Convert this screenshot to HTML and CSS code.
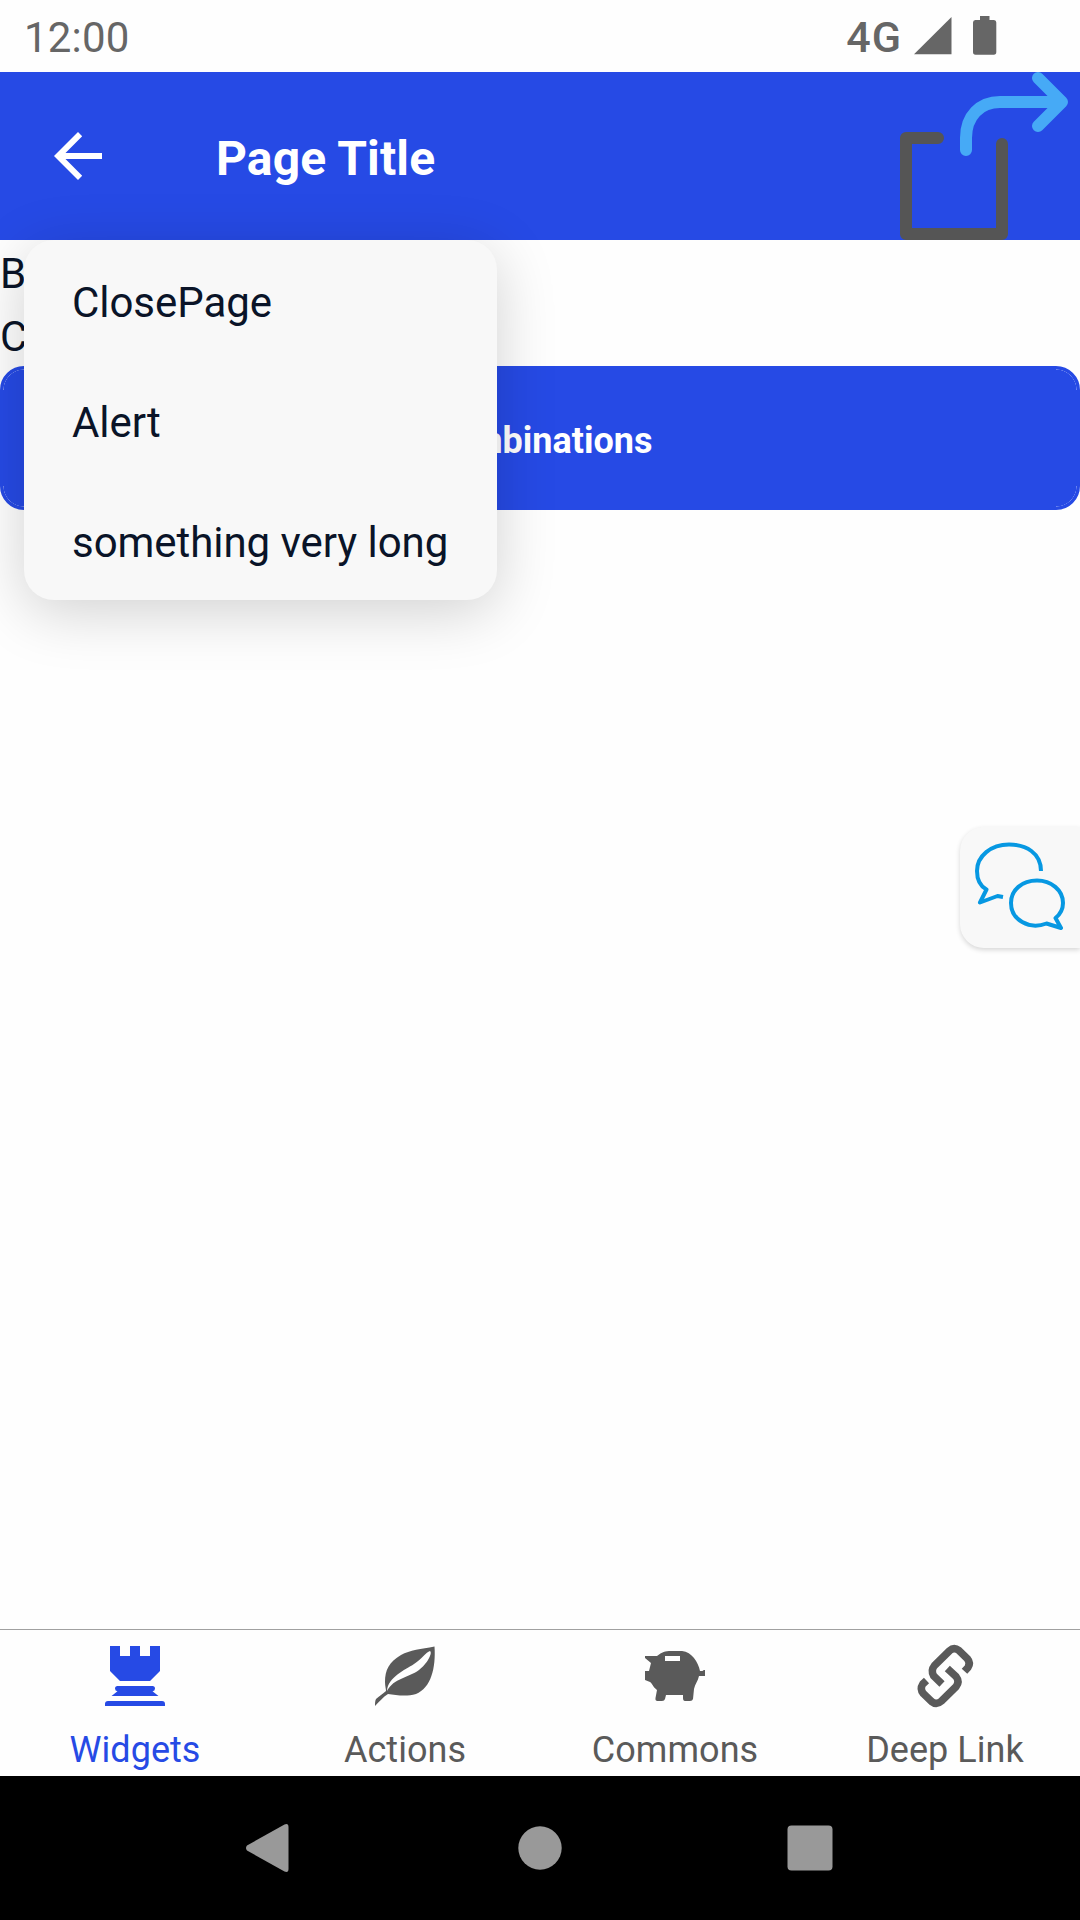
FILE: index.html
```html
<!DOCTYPE html>
<html lang="en">
<head>
<meta charset="utf-8">
<title>Page Title</title>
<link rel="stylesheet" href="styles.css">
</head>
<body>
<div class="screen">
  <div class="status">
    <span class="clock">12:00</span>
    <span class="network">4G</span>
    <svg class="signal" width="38" height="38" viewBox="0 0 38 38"><path d="M37.500 0V37.300H0Z"/></svg>
    <svg class="battery" width="24" height="39" viewBox="0 0 24 39"><path d="M7 0h9.500v4H21q2.300 0 2.300 2.500V36q0 2.700-2.500 2.700H2.500Q0 38.700 0 36V6.500Q0 4 2.300 4H7Z"/></svg>
  </div>
  <header class="header">
    <svg class="back" width="48" height="48" viewBox="0 0 48 48"><path d="M48 21v6H11.500l16.700 16.800L24 48 0 24 24 0l4.200 4.200L11.500 21Z"/></svg>
    <h1 class="title">Page Title</h1>
    <svg class="share" width="180" height="168" viewBox="0 0 180 168">
      <path class="share-box" d="M38 66H6v96h96V72"/>
      <path class="share-arrow" d="M66 78V66C66 44 80 30 100 30h60M138 6l24 24-24 24"/>
    </svg>
  </header>
  <main class="content">
    <p class="line">B</p>
    <p class="line">C</p>
    <button class="primary">Combinations</button>
    <div class="menu">
      <div class="menu-item">ClosePage</div>
      <div class="menu-item">Alert</div>
      <div class="menu-item">something very long</div>
    </div>
  </main>
  <div class="chat">
    <svg width="120" height="121" viewBox="1 0 120 121">
      <path d="M82 44C82 26 67 17.500 50 17.500C32 17.500 18 29 18 44C18 52 21 59 27.500 62.500L21 75.500L38.500 69L44 70"/>
      <path d="M96.500 91L102 101L87.500 96.500C70 103 52 93 52 76C52 63 63 53.500 78 53.500C92 53.500 104 63 104 76C104 82 101.500 87 96.500 91Z"/>
    </svg>
  </div>
  <nav class="tabs">
    <div class="tab active">
      <svg width="60" height="60" viewBox="0 0 60 60"><path d="M5 0H15V10H25V0H35V10H45V0H55V25L45 35H15L5 25ZM12.500 40H47.500Q50 40 50 42.500T47.500 45.200L53.500 50H6.500L12.500 45.200Q10 45 10 42.500T12.500 40ZM3 55H57Q60 55 60 58V60H0V58Q0 55 3 55Z"/></svg>
      <span>Widgets</span>
    </div>
    <div class="tab">
      <svg width="60" height="60" viewBox="0 0 60 60"><path fill-rule="evenodd" d="M59.500.500C46 3 35 4 26 9C14 16 10 24 10 36C10 40 11 43 11 45C8 48 4 50 1 53C0 55 0 57 0 60C4 56 8 51 13 48C21 49 31 51 41 48C56 42 61 22 59.500.500ZM55 5C58 7 52 18 44 24C33 32 19 32 12 45C13 31 30 24 39 18C47 13 51 6 55 5Z"/></svg>
      <span>Actions</span>
    </div>
    <div class="tab">
      <svg width="60" height="60" viewBox="0 0 60 60"><path fill-rule="evenodd" d="M0 10H12C17 6 20 5 26 5H37C47 6 53 16 55 25H57Q58.500 25 58.500 24H60V30H54C53 35 50 38 49 43L48 53Q47.500 55 45 55H40Q38 55 38 52V49H21L20 53Q19.500 55 17 55H12.500Q10 55 10.500 52L12 44C8 41 7 37 5 36L0 34V25H4L6 17L0 12ZM20 10V15H35V10Z"/></svg>
      <span>Commons</span>
    </div>
    <div class="tab">
      <svg width="60" height="60" viewBox="-3 0 60 60">
        <path class="link" d="M24 38L15.700 30Q12.500 24.500 16.500 19.500L31.500 4.800Q36 .800 41 4.500L49.200 12.500Q53 17 50 21.500L46.500 25.300M29.300 22.500L38 30.500Q42 35.500 38 40.800L23.500 55Q18.500 59.500 13.500 55.500L5.500 47.800Q1.500 43 4.800 38L8.500 34.500"/>
      </svg>
      <span>Deep Link</span>
    </div>
  </nav>
  <div class="sysnav">
    <svg width="48" height="60" viewBox="0 0 48 60"><path d="M1 27.500L38.500 6.500Q42.500 5 42.500 9V51Q42.500 55 38.500 53.500L1 32.500Q-1 30 1 27.500Z"/></svg>
    <svg width="48" height="60" viewBox="0 0 48 60"><circle cx="24" cy="30" r="21.700"/></svg>
    <svg width="48" height="60" viewBox="0 0 48 60"><rect x="1.500" y="7.500" width="45" height="45" rx="4"/></svg>
  </div>
</div>
</body>
</html>
```
FILE: styles.css
```css
* { box-sizing: border-box; }
body { margin: 0; background: #fefefe; font-family: Roboto, sans-serif; }
svg { display: block; flex: none; overflow: visible; }
.screen {
  position: relative;
  display: flex;
  flex-direction: column;
  width: 1080px;
  height: 1920px;
  overflow: hidden;
}
.status {
  display: flex;
  height: 72px;
  padding: 0 83px 0 24px;
  align-items: center;
  color: #666;
  fill: #666;
  font-size: 42px;
}
.clock { margin-right: auto; padding-top: 3px; letter-spacing: 0.2px; }
.network { padding-top: 1px; font-size: 43px; font-weight: 500; letter-spacing: 1px; }
.signal { margin: -1px 0 0 12px; }
.battery { margin: -1px 0 0 21px; }
.header {
  display: flex;
  height: 168px;
  align-items: center;
  padding-left: 54px;
  background: #264ae5;
}
.back { fill: #fff; }
.title {
  margin: 0 auto 0 114px;
  padding-top: 4px;
  color: #fff;
  font-size: 48px;
  font-weight: 700;
  letter-spacing: 0.15px;
}
.share { fill: none; stroke-width: 12px; stroke-linecap: round; stroke-linejoin: round; }
.share-box { stroke: #555; }
.share-arrow { stroke: #46aaf6; }
.content { position: relative; flex: 1; color: #0a1428; font-size: 42px; }
.line { margin: 0; height: 63px; line-height: 67px; }
/* The faint seam between the button's border and its fill shows in the corners. */
.primary {
  --seam: transparent 20px, rgba(255, 255, 255, 0.35) 20.500px, transparent 21px;
  display: block;
  width: 100%;
  height: 144px;
  padding: 6px 0 0;
  border: 3px solid #264ae5;
  border-radius: 24px;
  background:
    radial-gradient(circle at 100% 100%, var(--seam)) 0 0 / 21px 21px no-repeat,
    radial-gradient(circle at 0 100%, var(--seam)) 100% 0 / 21px 21px no-repeat,
    radial-gradient(circle at 100% 0, var(--seam)) 0 100% / 21px 21px no-repeat,
    radial-gradient(circle at 0 0, var(--seam)) 100% 100% / 21px 21px no-repeat,
    #264ae5;
  color: #fff;
  font: 700 36px Roboto, sans-serif;
}
.menu {
  position: absolute;
  top: 0;
  left: 24px;
  width: 473px;
  border-radius: 30px;
  background: #f8f8f8;
  box-shadow: 0 12px 60px rgba(0, 0, 0, 0.18);
}
.menu-item {
  height: 120px;
  padding: 3px 48px 0;
  line-height: 120px;
  letter-spacing: -0.05px;
  white-space: nowrap;
}
.chat {
  position: absolute;
  top: 827px;
  right: 0;
  width: 120px;
  height: 121px;
  border-radius: 24px 0 0 24px;
  background: #f8f8f8;
  box-shadow: 0 2px 5px rgba(0, 0, 0, 0.16);
}
.chat svg { fill: none; stroke: #0798e2; stroke-width: 4px; stroke-linejoin: round; }
.tabs {
  display: flex;
  height: 147px;
  border-top: 1px solid #a0a0a0;
  color: #5a5a5a;
  fill: #5a5a5a;
}
.tab {
  display: flex;
  flex: 1;
  flex-direction: column;
  align-items: center;
  gap: 22px;
  padding-top: 16px;
  font-size: 36px;
  line-height: 44px;
  letter-spacing: 0.05px;
}
.active { color: #264ae5; fill: #264ae5; }
.link { fill: none; stroke: #5a5a5a; stroke-width: 7.5px; }
.sysnav {
  display: flex;
  height: 144px;
  align-items: center;
  justify-content: center;
  gap: 222px;
  background: #000;
  fill: #999;
}
```
